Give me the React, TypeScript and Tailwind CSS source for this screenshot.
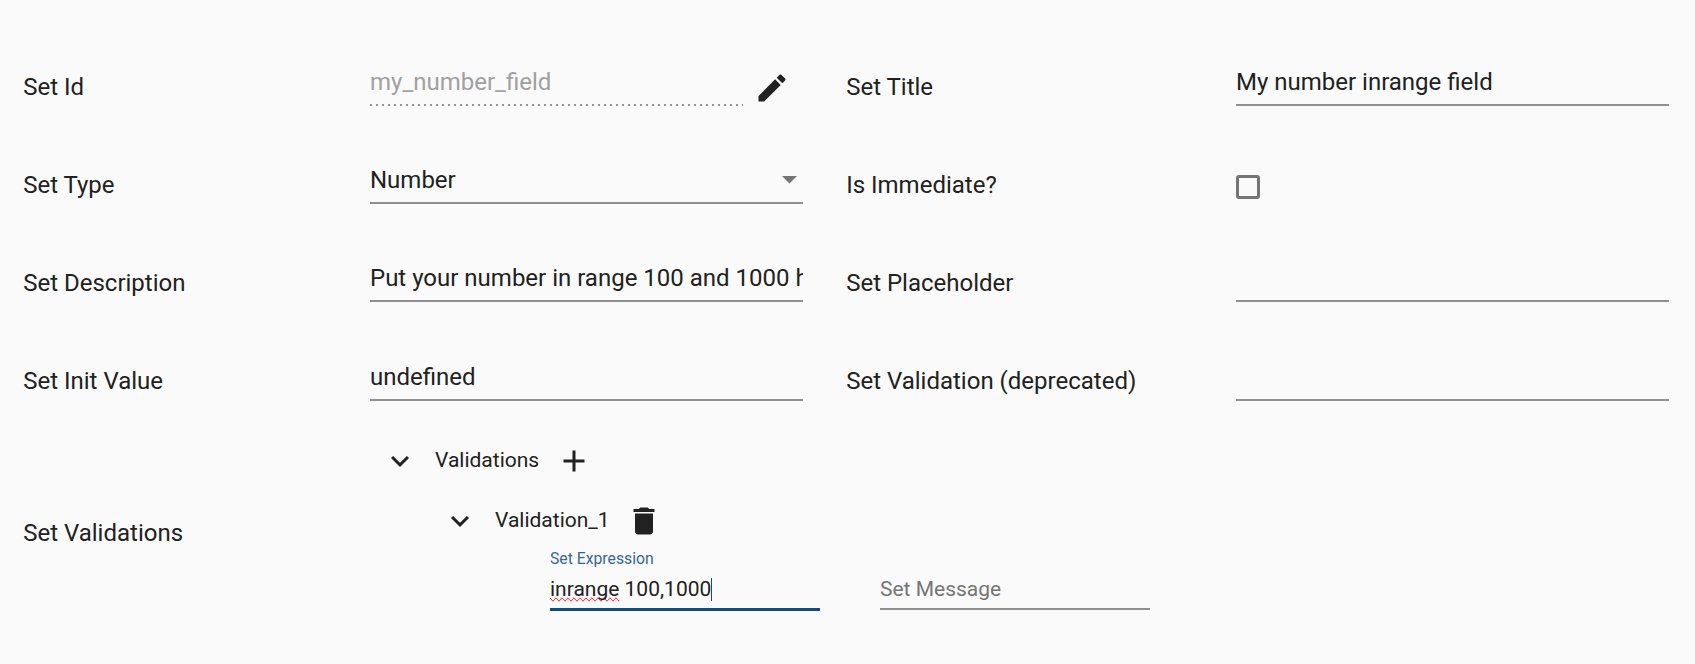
import type { ReactNode } from "react";

const paths = {
  edit: "M3 17.25V21h3.75L17.81 9.94l-3.75-3.75L3 17.25zM20.71 7.04c.39-.39.39-1.02 0-1.41l-2.34-2.34c-.39-.39-1.02-.39-1.41 0l-1.83 1.83 3.75 3.75 1.83-1.83z",
  expand: "M16.59 8.59L12 13.17 7.41 8.59 6 10l6 6 6-6z",
  add: "M19 13h-6v6h-2v-6H5v-2h6V5h2v6h6v2z",
  trash: "M6 19c0 1.1.9 2 2 2h8c1.1 0 2-.9 2-2V7H6v12zM19 4h-3.5l-1-1h-5l-1 1H5v2h14V4z",
};

function Icon({ name }: { name: keyof typeof paths }) {
  return (
    <svg viewBox="0 0 24 24" className="size-9 shrink-0 fill-[#212121]">
      <path d={paths[name]} />
    </svg>
  );
}

function Field({ children }: { children?: ReactNode }) {
  return (
    <div className="flex h-[38px] w-[433px] items-start overflow-hidden border-b-2 border-[#909090] leading-7 whitespace-nowrap">
      {children}
    </div>
  );
}

function Row({
  label,
  children,
  secondLabel,
  second,
  className = "h-[98px]",
  labelClassName = "",
}: {
  label: string;
  children: ReactNode;
  secondLabel: string;
  second: ReactNode;
  className?: string;
  labelClassName?: string;
}) {
  return (
    <div className={`grid grid-cols-[346.8px_476.2px_389.8px_433px] items-center ${className}`}>
      <span className={labelClassName}>{label}</span>
      <div>{children}</div>
      <span className={labelClassName}>{secondLabel}</span>
      <div>{second}</div>
    </div>
  );
}

export default function App() {
  return (
    <main className="h-[664px] w-[1695px] overflow-hidden bg-[#fafafa] pt-[38px] pl-[23.2px] font-[Roboto,sans-serif] text-2xl leading-7 text-[#212121]">
      <Row label="Set Id" secondLabel="Set Title" second={<Field>My number inrange field</Field>}>
        <div className="flex items-center">
          <div className="flex h-[38px] w-[373px] flex-col justify-between text-[#a0a0a0]">
            <span>my_number_field</span>
            <div className="h-0.5 bg-[linear-gradient(to_right,#949494_0_33%,transparent_33%)] bg-[length:6px_2px]" />
          </div>
          <div className="ml-[11.5px] pt-0.5">
            <Icon name="edit" />
          </div>
        </div>
      </Row>
      <Row
        label="Set Type"
        secondLabel="Is Immediate?"
        second={<div className="mt-1 size-6 rounded-[3px] border-3 border-[#757575]" />}
      >
        <Field>
          <span className="flex-1">Number</span>
          <svg viewBox="0 0 15 7.5" className="mt-2.5 mr-1.5 h-[7.5px] w-[15px] fill-[#757575]">
            <path d="M0 0h15L7.5 7.5z" />
          </svg>
        </Field>
      </Row>
      <Row label="Set Description" secondLabel="Set Placeholder" second={<Field />}>
        <Field>Put your number in range 100 and 1000 here</Field>
      </Row>
      <Row
        className="h-[100px]"
        labelClassName="pb-0.5"
        label="Set Init Value"
        secondLabel="Set Validation (deprecated)"
        second={<Field />}
      >
        <Field>undefined</Field>
      </Row>
      <section className="grid h-[202px] grid-cols-[346.8px_1fr] items-center">
        <span>Set Validations</span>
        <div className="flex h-[202px] flex-col pl-3 text-[21px] leading-6">
          <div className="flex h-[58px] items-center">
            <Icon name="expand" />
            <span className="ml-[17px] w-[121px] pb-0.5">Validations</span>
            <Icon name="add" />
          </div>
          <div className="flex h-[60px] items-center pt-0.5 pl-[60px]">
            <Icon name="expand" />
            <span className="ml-[17px] w-[131.5px] pb-0.5">Validation_1</span>
            <Icon name="trash" />
          </div>
          <div className="flex gap-[60px] pl-[168px]">
            <div className="h-[61px] w-[270px] border-b-3 border-[#0f4c81]">
              <div className="h-[27px] pt-px text-[15.75px] leading-[15px] text-[#346797]">
                Set Expression
              </div>
              <div className="flex items-center">
                <span className="[text-decoration-line:spelling-error]">inrange</span>
                <span className="whitespace-pre"> 100,1000</span>
                <span className="h-[23px] w-px bg-[#0f4c81]" />
              </div>
            </div>
            <div className="h-[60px] w-[270px] border-b-2 border-[#909090] pt-[27px] text-[#757575]">
              Set Message
            </div>
          </div>
        </div>
      </section>
    </main>
  );
}
